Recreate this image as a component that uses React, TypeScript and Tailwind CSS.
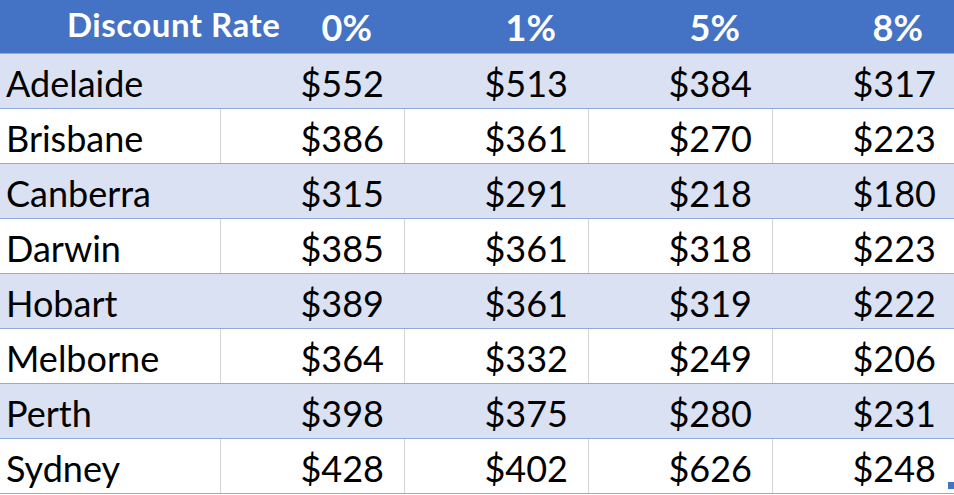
import React from "react";

const rows: [string, string, string, string, string][] = [
  ["Adelaide", "$552", "$513", "$384", "$317"],
  ["Brisbane", "$386", "$361", "$270", "$223"],
  ["Canberra", "$315", "$291", "$218", "$180"],
  ["Darwin", "$385", "$361", "$318", "$223"],
  ["Hobart", "$389", "$361", "$319", "$222"],
  ["Melborne", "$364", "$332", "$249", "$206"],
  ["Perth", "$398", "$375", "$280", "$231"],
  ["Sydney", "$428", "$402", "$626", "$248"],
];

export default function App() {
  return (
    <div
      className="relative w-[954px] h-[495px] bg-white overflow-hidden text-black"
      style={{ fontFamily: "Lato, 'Open Sans', sans-serif" }}
    >
      <div className="flex h-[54px] bg-[#4472C4] border-b border-[#8EA9DB] text-white font-bold text-[36px] leading-none">
        <div className="w-[220px] pl-[67px] pt-[8px] whitespace-nowrap text-[33px] tracking-[0.5px]">Discount Rate</div>
        <div className="w-[184px] pr-[32px] pt-[9px] text-right">0%</div>
        <div className="w-[184px] pr-[32px] pt-[9px] text-right">1%</div>
        <div className="w-[184px] pr-[32px] pt-[9px] text-right">5%</div>
        <div className="w-[182px] pr-[31px] pt-[9px] text-right">8%</div>
      </div>
      {rows.map((r, i) => {
        const banded = i % 2 === 0;
        return (
          <div
            key={r[0]}
            className={
              banded
                ? "flex h-[55px] bg-[#D9E1F2] border-b border-[#8EA9DB] text-[36px] leading-none"
                : "flex h-[55px] bg-white border-b border-[#8EA9DB] text-[36px] leading-none"
            }
          >
            <div className="w-[220px] pl-[6px] pt-[11px]">{r[0]}</div>
            {r.slice(1).map((v, j) => (
              <div
                key={j}
                className={
                  (banded ? "border-l border-transparent " : "border-l border-[#D4D4D4] ") +
                  (j === 3
                    ? "w-[182px] pr-[18px] pt-[11px] text-right"
                    : "w-[184px] pr-[20px] pt-[11px] text-right")
                }
              >
                {v}
              </div>
            ))}
          </div>
        );
      })}
      <div className="absolute left-[948px] top-[482px] w-[6px] h-[7px] bg-[#4472C4]" />
    </div>
  );
}
